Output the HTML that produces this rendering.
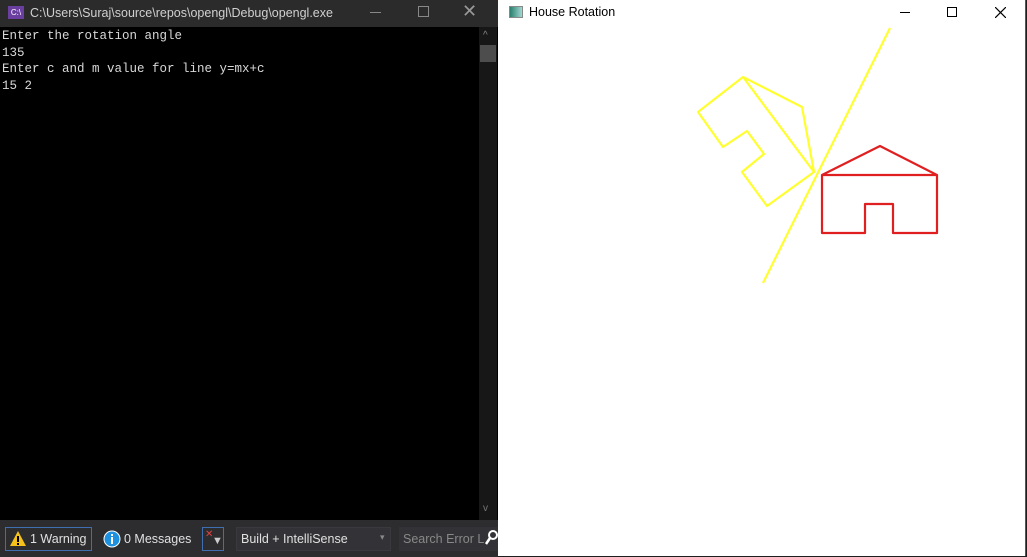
<!DOCTYPE html>
<html><head><meta charset="utf-8"><style>
*{margin:0;padding:0;box-sizing:border-box}
body{width:1027px;height:557px;overflow:hidden;background:#1e1e1e;position:relative;font-family:"Liberation Sans",sans-serif}
.abs{position:absolute}
#ctitle{left:0;top:0;width:500px;height:27px;background:#2b2b2b;color:#d0d0d0;font-size:12.5px}
#console{left:0;top:27px;width:498px;height:493px;background:#000;color:#d8d8d8;font-family:"Liberation Mono",monospace;font-size:12.5px;line-height:16.5px;padding:1px 0 0 2px;white-space:pre}
#sb{left:479px;top:27px;width:18px;height:493px;background:#171717}
#bar{left:0;top:520px;width:498px;height:37px;background:#2d2d30;color:#e0e0e0;font-size:12.5px}
#win{left:498px;top:0;width:528px;height:556px;background:#fff;border-right:1px solid #555}
</style></head><body>
<div id="ctitle" class="abs">
  <div class="abs" style="left:8px;top:6px;width:16px;height:13px;background:#6b3fa0;color:#fff;font-size:8px;line-height:13px;text-align:center">C:\</div>
  <div class="abs" style="left:30px;top:6px">C:\Users\Suraj\source\repos\opengl\Debug\opengl.exe</div>
  <div class="abs" style="left:370px;top:12px;width:11px;height:1px;background:#888"></div>
  <div class="abs" style="left:418px;top:6px;width:11px;height:11px;border:1px solid #888"></div>
  <div class="abs" style="left:462px;top:1px;color:#999;font-size:18px">✕</div>
</div>
<div id="console" class="abs">Enter the rotation angle
135
Enter c and m value for line y=mx+c
15 2</div>
<div id="sb" class="abs">
  <div class="abs" style="left:4px;top:3px;color:#888;font-size:10px">^</div>
  <div class="abs" style="left:1px;top:18px;width:16px;height:17px;background:#4d4d4d"></div>
  <div class="abs" style="left:4px;top:476px;color:#777;font-size:10px">v</div>
</div>
<div id="bar" class="abs">
  <div class="abs" style="left:5px;top:7px;width:87px;height:24px;border:1px solid #3f6fb0"></div>
  <svg class="abs" style="left:9px;top:10px" width="18" height="17"><path d="M9 1L17 16H1Z" fill="#f4c21b"/><rect x="8" y="6" width="2" height="6" fill="#000"/><rect x="8" y="13" width="2" height="2" fill="#000"/></svg>
  <div class="abs" style="left:30px;top:12px">1 Warning</div>
  <svg class="abs" style="left:103px;top:10px" width="18" height="18"><circle cx="9" cy="9" r="8" fill="#1e90e0" stroke="#fff" stroke-width="1"/><rect x="8" y="7" width="2" height="7" fill="#fff"/><rect x="8" y="4" width="2" height="2" fill="#fff"/></svg>
  <div class="abs" style="left:124px;top:12px">0 Messages</div>
  <div class="abs" style="left:202px;top:7px;width:22px;height:24px;border:1px solid #3f6fb0"></div>
  <div class="abs" style="left:205px;top:9px;color:#e04040;font-size:10px">✕</div>
  <div class="abs" style="left:212px;top:15px;color:#ccc;font-size:11px">▼</div>
  <div class="abs" style="left:236px;top:7px;width:155px;height:24px;border:1px solid #3a3a3e;background:#333337"></div>
  <div class="abs" style="left:241px;top:12px">Build + IntelliSense</div>
  <div class="abs" style="left:380px;top:12px;color:#888;font-size:9px">▾</div>
  <div class="abs" style="left:399px;top:7px;width:99px;height:24px;background:#333337"></div>
  <div class="abs" style="left:403px;top:12px;color:#888">Search Error L</div>
  <svg class="abs" style="left:484px;top:10px" width="14" height="16"><circle cx="9" cy="5" r="4" fill="none" stroke="#fff" stroke-width="2"/><path d="M6 8L2 14" stroke="#fff" stroke-width="2.5"/></svg>
</div>
<div id="win" class="abs">
  <div class="abs" style="left:11px;top:6px;width:14px;height:12px;border:1px solid #888;background:linear-gradient(90deg,#2a8070,#a0d8d0)"></div>
  <div class="abs" style="left:31px;top:5px;font-size:12.5px;color:#000">House Rotation</div>
  <div class="abs" style="left:402px;top:12px;width:10px;height:1px;background:#000"></div>
  <div class="abs" style="left:449px;top:7px;width:10px;height:10px;border:1px solid #000"></div>
  <svg class="abs" style="left:497px;top:7px" width="11" height="11"><path d="M0 0L11 11M11 0L0 11" stroke="#000" stroke-width="1.2"/></svg>
</div>
<svg class="abs" style="left:0;top:0" width="1027" height="557">
  <g fill="none" stroke-width="2.2" stroke-linejoin="round">
    <path d="M890 28L763 283" stroke="#ffff30"/>
    <path d="M743 77L802 107L814 172L767 206L742 172L764 154L747 131L723 147L698 112Z M743 77L814 172" stroke="#ffff30"/>
    <path d="M822 175L880 146L937 175Z M822 175V233H865V204H893V233H937V175" stroke="#e02020"/>
  </g>
</svg>
</body></html>
